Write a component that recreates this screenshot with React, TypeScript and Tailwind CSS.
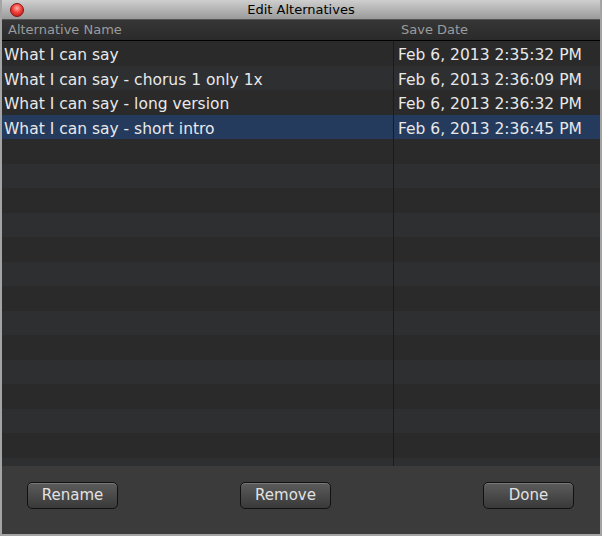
import React from "react";

type Alt = { name: string; date: string };

const alternatives: Alt[] = [
  { name: "What I can say", date: "Feb 6, 2013 2:35:32 PM" },
  { name: "What I can say - chorus 1 only 1x", date: "Feb 6, 2013 2:36:09 PM" },
  { name: "What I can say - long version", date: "Feb 6, 2013 2:36:32 PM" },
  { name: "What I can say - short intro", date: "Feb 6, 2013 2:36:45 PM" },
];

const SELECTED = 3;
const TOTAL_ROWS = 18;

function DialogButton({ label, className = "" }: { label: string; className?: string }) {
  return (
    <button
      type="button"
      className={`h-[27px] w-[91px] rounded-[5px] border border-[#111] bg-gradient-to-b from-[#5c5c5c] to-[#393939] text-[15px] text-[#e2e2e2] shadow-[inset_0_1px_0_rgba(255,255,255,0.18)] ${className}`}
    >
      {label}
    </button>
  );
}

export default function App() {
  const rows = Array.from({ length: TOTAL_ROWS }, (_, i) => alternatives[i] ?? null);

  return (
    <div
      className="flex h-[536px] w-[602px] flex-col overflow-hidden border-x-2 border-b-2 border-[#a4a4a4] bg-[#2b2b2b]"
      style={{ fontFamily: '"DejaVu Sans", Verdana, sans-serif' }}
    >
      {/* title bar */}
      <div className="relative flex h-[20px] shrink-0 items-center justify-center border-b border-[#555] bg-gradient-to-b from-[#cfcfcf] to-[#9a9a9a]">
        <span className="absolute left-[8px] top-[3px] h-[14px] w-[14px] rounded-full border border-[#8a1010] bg-[radial-gradient(circle_at_50%_35%,#ffb0a8_0%,#f0403a_45%,#b01010_100%)]" />
        <span className="text-[13px] leading-none text-black">Edit Alternatives</span>
      </div>

      {/* header */}
      <div className="flex h-[21px] shrink-0 items-center border-b border-black bg-gradient-to-b from-[#363636] to-[#2a2a2a] text-[13px] text-[#9c9c9c]">
        <div className="w-[393px] pl-[6px]">Alternative Name</div>
        <div className="pl-[6px]">Save Date</div>
      </div>

      {/* list */}
      <div className="relative flex-1 overflow-hidden">
        {rows.map((alt, i) => {
          const selected = i === SELECTED;
          const bg = selected ? "bg-[#243b5e]" : i % 2 === 0 ? "bg-[#2a2a2a]" : "bg-[#2e2f31]";
          return (
            <div
              key={i}
              className={`flex h-[24.5px] items-center pt-[4px] text-[15.5px] leading-[20px] text-[#e8e8e8] ${bg}`}
            >
              <div className="w-[393px] whitespace-nowrap pl-[2px]">{alt?.name}</div>
              <div className="whitespace-nowrap pl-[3px]">{alt?.date}</div>
            </div>
          );
        })}
        <div className="absolute bottom-0 left-[391px] top-0 w-px bg-[#1b1b1b]" />
      </div>

      {/* footer */}
      <div className="flex h-[68px] shrink-0 items-start bg-[#3b3b3b] pl-[25px] pt-[16px]">
        <DialogButton label="Rename" />
        <DialogButton label="Remove" className="ml-[122px]" />
        <DialogButton label="Done" className="ml-[152px]" />
      </div>
    </div>
  );
}
